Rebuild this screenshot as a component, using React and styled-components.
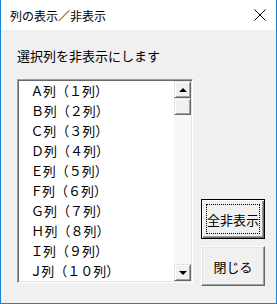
import React from 'react';
import styled, { createGlobalStyle } from 'styled-components';

const GlobalStyle = createGlobalStyle`
  html, body {
    margin: 0;
    padding: 0;
    background: #ffffff;
  }
  * {
    box-sizing: border-box;
  }
`;

const Window = styled.div`
  width: 277px;
  height: 304px;
  display: flex;
  flex-direction: column;
  border: 1px solid #1883d7;
  border-top: none;
  font-family: "Noto Sans CJK JP", "Noto Sans", sans-serif;
  color: #000;
`;

const TitleBar = styled.div`
  height: 30px;
  display: flex;
  align-items: center;
  justify-content: space-between;
  padding: 0 10px 0 9px;
  background: #ffffff;
  font-size: 12px;
`;

const CloseIcon = styled.svg`
  width: 12px;
  height: 12px;
`;

const Body = styled.div`
  flex: 1;
  background: #f0f0f0;
  padding: 17px 0 0 16px;
`;

const Caption = styled.div`
  font-size: 13px;
  line-height: 18px;
  margin-bottom: 14px;
`;

const Row = styled.div`
  display: flex;
  gap: 8px;
`;

const ListBox = styled.div`
  width: 176px;
  height: 204px;
  display: flex;
  background: #fff;
  border: 1px solid;
  border-color: #a0a0a0 #ffffff #ffffff #a0a0a0;
  box-shadow: inset 1px 1px 0 #696969, inset -1px -1px 0 #e3e3e3;
  padding: 1px;
`;

const Items = styled.ul`
  flex: 1;
  list-style: none;
  margin: 0;
  padding: 0 0 0 13px;
  overflow: hidden;
`;

const Item = styled.li`
  height: 20px;
  line-height: 20px;
  font-size: 13px;
  white-space: nowrap;
`;

const Letter = styled.span`
  font-feature-settings: "palt";
  margin-right: 1px;
`;

const ScrollBar = styled.div`
  width: 17px;
  display: flex;
  flex-direction: column;
  background: repeating-conic-gradient(#f0f0f0 0 25%, #ffffff 0 50%) 0 0 / 2px 2px;
`;

const ScrollButton = styled.div`
  width: 17px;
  height: 17px;
  display: flex;
  align-items: center;
  justify-content: center;
  background: #f0f0f0;
  border: 1px solid;
  border-color: #e3e3e3 #696969 #696969 #e3e3e3;
  box-shadow: inset 1px 1px 0 #ffffff, inset -1px -1px 0 #a0a0a0;
  margin-top: ${p => (p.$bottom ? 'auto' : '0')};
`;

const Arrow = styled.div`
  width: 0;
  height: 0;
  border-left: 4px solid transparent;
  border-right: 4px solid transparent;
  ${p => (p.$down ? 'border-top: 4px solid #000;' : 'border-bottom: 4px solid #000;')}
`;

const ButtonColumn = styled.div`
  display: flex;
  flex-direction: column;
  gap: 7px;
  padding-top: 120px;
`;

const Button = styled.button`
  width: 64px;
  height: 40px;
  padding: 0;
  display: flex;
  align-items: center;
  justify-content: center;
  font-family: inherit;
  font-size: 13px;
  color: #000;
  background: #f0f0f0;
  border: 1px solid;
  border-color: ${p => (p.$default ? '#000' : '#ffffff #696969 #696969 #ffffff')};
  box-shadow: ${p =>
    p.$default
      ? 'inset 1px 1px 0 #ffffff, inset -1px -1px 0 #696969, inset -2px -2px 0 #a0a0a0'
      : 'inset -1px -1px 0 #a0a0a0, inset 1px 1px 0 #e3e3e3'};
`;

const FocusRing = styled.span`
  display: flex;
  align-items: center;
  justify-content: center;
  width: calc(100% - 8px);
  height: calc(100% - 8px);
  border: 1px dotted #000;
`;

const columns = ['Ａ', 'Ｂ', 'Ｃ', 'Ｄ', 'Ｅ', 'Ｆ', 'Ｇ', 'Ｈ', 'Ｉ', 'Ｊ'];
const toWide = n => String(n).replace(/[0-9]/g, d => String.fromCharCode(d.charCodeAt(0) + 0xfee0));

export default function App() {
  return (
    <>
      <GlobalStyle />
      <Window>
        <TitleBar>
          <span>列の表示／非表示</span>
          <CloseIcon viewBox="0 0 12 12">
            <path d="M0.5 0.5 L11.5 11.5 M11.5 0.5 L0.5 11.5" stroke="#000" strokeWidth="1" />
          </CloseIcon>
        </TitleBar>
        <Body>
          <Caption>選択列を非表示にします</Caption>
          <Row>
            <ListBox>
              <Items>
                {columns.map((c, i) => (
                  <Item key={c}>
                    <Letter>{c}</Letter>
                    {`列（${toWide(i + 1)}列）`}
                  </Item>
                ))}
              </Items>
              <ScrollBar>
                <ScrollButton>
                  <Arrow />
                </ScrollButton>
                <ScrollButton />
                <ScrollButton $bottom>
                  <Arrow $down />
                </ScrollButton>
              </ScrollBar>
            </ListBox>
            <ButtonColumn>
              <Button $default>
                <FocusRing>全非表示</FocusRing>
              </Button>
              <Button>閉じる</Button>
            </ButtonColumn>
          </Row>
        </Body>
      </Window>
    </>
  );
}
